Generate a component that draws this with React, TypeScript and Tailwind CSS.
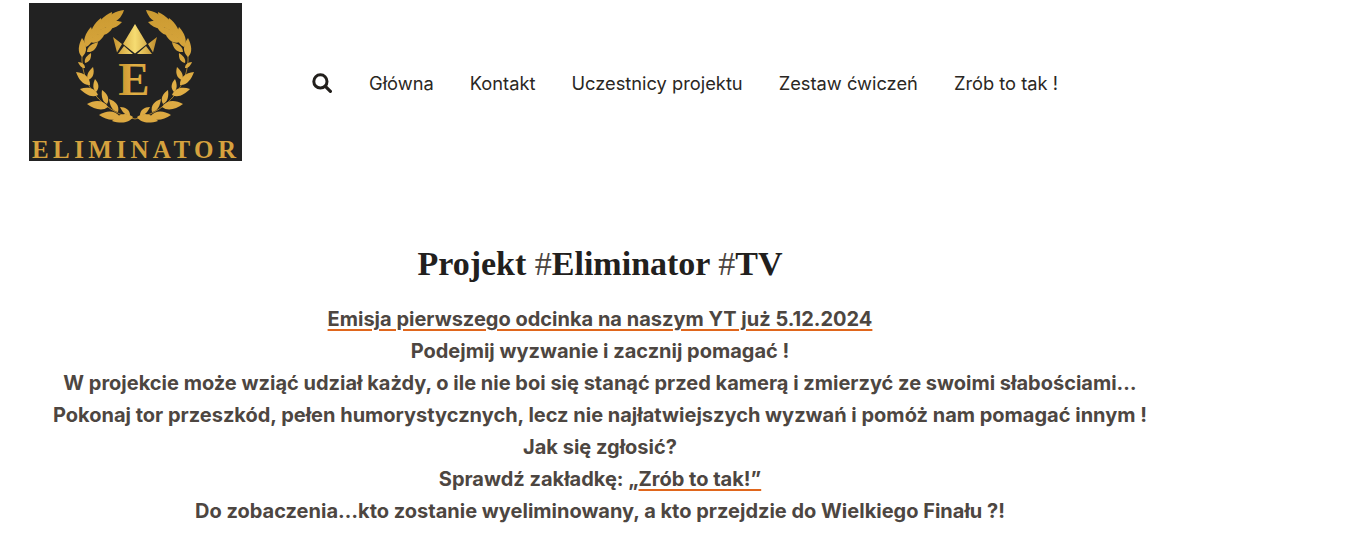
import React from "react";

const leaves: number[][] = [
  [78, 19, 95, 7],
  [74, 23, 93, 19],
  [69, 27, 83, 9],
  [68, 31, 84, 24],
  [63, 35, 72, 15],
  [61, 39, 76, 30],
  [57, 44, 62, 24],
  [58, 49, 69, 39],
  [53, 54, 53, 35],
  [56, 60, 62, 50],
  [56, 65, 49, 59],
  [59, 77, 64, 64],
  [61, 82, 47, 69],
  [67, 89, 66, 76],
  [69, 92, 51, 86],
  [78, 101, 73, 87],
  [79, 104, 58, 101],
  [89, 109, 80, 96],
  [91, 114, 70, 112],
  [101, 112, 91, 104],
  [104, 114, 83, 118],
];

function leaf([x1, y1, x2, y2]: number[]) {
  const dx = x2 - x1;
  const dy = y2 - y1;
  const w = 0.3;
  const nx = -dy * w;
  const ny = dx * w;
  const p = (t: number, s: number) => `${(x1 + dx * t + nx * s).toFixed(1)} ${(y1 + dy * t + ny * s).toFixed(1)}`;
  return `M${x1} ${y1} C${p(0.25, 1)} ${p(0.65, 0.9)} ${x2} ${y2} C${p(0.65, -0.6)} ${p(0.25, -0.9)} ${x1} ${y1} Z`;
}

function Logo() {
  return (
    <svg width="213" height="158" viewBox="0 0 213 158" className="block shrink-0 overflow-visible bg-[#222222]">
      <defs>
        <linearGradient id="g" x1="0" y1="0" x2="0" y2="158" gradientUnits="userSpaceOnUse">
          <stop offset="0" stopColor="#c9982f" />
          <stop offset="0.5" stopColor="#e0ae45" />
          <stop offset="1" stopColor="#d8a33e" />
        </linearGradient>
        <linearGradient id="c" x1="84" y1="0" x2="128" y2="0" gradientUnits="userSpaceOnUse">
          <stop offset="0" stopColor="#c8952f" />
          <stop offset="0.5" stopColor="#f6dc72" />
          <stop offset="1" stopColor="#c08d2c" />
        </linearGradient>
        <linearGradient id="e" x1="91" y1="0" x2="119" y2="0" gradientUnits="userSpaceOnUse">
          <stop offset="0" stopColor="#c8952f" />
          <stop offset="0.5" stopColor="#e2b045" />
          <stop offset="1" stopColor="#d8a43e" />
        </linearGradient>
      </defs>
      {[0, 1].map((m) => (
        <g key={m} transform={m === 0 ? undefined : "translate(212 0) scale(-1 1)"}>
          <path d="M106 116 C78 110 55 88 53 58 C52 42 64 28 80 18" fill="none" stroke="#c8952f" strokeWidth="0.8" />
          {leaves.map((l, i) => (
            <path key={i} d={leaf(l)} fill="url(#g)" />
          ))}
        </g>
      ))}
      <path d="M106 21 L118 41 L106 50.5 L94 41 Z" fill="url(#c)" />
      <path d="M84 34 L93 41 L88 49.5 Z M128 34 L119 41 L124 49.5 Z" fill="url(#c)" />
      <path d="M95 43 L104 51 L89 51 Z M117 43 L108 51 L123 51 Z" fill="url(#c)" />
      <text x="105" y="92" textAnchor="middle" fontFamily="'Liberation Serif', serif" fontWeight="700" fontSize="47" fill="url(#e)">E</text>
      <text x="3" y="155" letterSpacing="4.4" fontFamily="'Liberation Serif', serif" fontWeight="700" fontSize="25" fill="#d6a23e">ELIMINATOR</text>
    </svg>
  );
}

function SearchIcon() {
  return (
    <svg width="20" height="20" viewBox="0 0 20 20" fill="none" stroke="#221f1c" className="block">
      <circle cx="8.4" cy="8.4" r="6.6" strokeWidth="3" />
      <path d="M13.4 13.4 L18.4 18.4" strokeWidth="3.2" strokeLinecap="round" />
    </svg>
  );
}

const link = "underline decoration-[#e0661c] decoration-2 underline-offset-[3px]";

export default function App() {
  return (
    <div className="min-h-[553px] bg-white font-['Inter',sans-serif] overflow-hidden">
      <header className="flex items-center pl-[29px] pt-[3px]">
        <Logo />
        <nav className="ml-[70px] mt-[2px] flex items-center gap-9 text-[18.3px] leading-6 text-[#2a2723]">
          <SearchIcon />
          <span className="ml-[1px]">Główna</span>
          <span>Kontakt</span>
          <span>Uczestnicy projektu</span>
          <span>Zestaw ćwiczeń</span>
          <span>Zrób to tak !</span>
        </nav>
      </header>
      <main className="w-[1200px] pt-[80px] text-center">
        <h1 className="font-['Liberation_Serif',serif] text-[34px] font-bold leading-[46px] text-[#22201d]">
          Projekt <span className="font-normal text-[#4d4641]">#</span>Eliminator <span className="font-normal text-[#4d4641]">#</span>TV
        </h1>
        <div className="mt-[16px] text-[20px] font-bold leading-8 text-[#4d4641]">
          <p><span className={link}>Emisja pierwszego odcinka na naszym YT już 5.12.2024</span></p>
          <p>Podejmij wyzwanie i zacznij pomagać !</p>
          <p>W projekcie może wziąć udział każdy, o ile nie boi się stanąć przed kamerą i zmierzyć ze swoimi słabościami…</p>
          <p>Pokonaj tor przeszkód, pełen humorystycznych, lecz nie najłatwiejszych wyzwań i pomóż nam pomagać innym !</p>
          <p>Jak się zgłosić?</p>
          <p>Sprawdź zakładkę: „<span className={link}>Zrób to tak!”</span></p>
          <p>Do zobaczenia…kto zostanie wyeliminowany, a kto przejdzie do Wielkiego Finału ?!</p>
        </div>
      </main>
    </div>
  );
}
